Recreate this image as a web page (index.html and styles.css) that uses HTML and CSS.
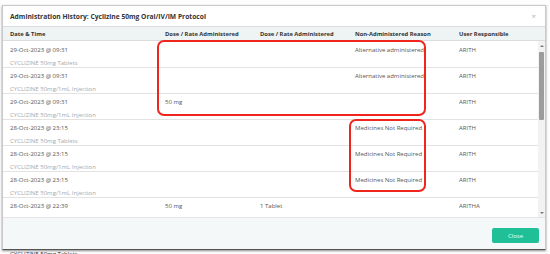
FILE: index.html
```html
<!DOCTYPE html>
<html>
<head>
<meta charset="utf-8">
<link rel="stylesheet" href="styles.css">
</head>
<body>
<div class="backdrop-line"></div>
<div class="modal">
  <div class="modal-header">
    <span class="title">Administration History: Cyclizine 50mg Oral/IV/IM Protocol</span>
    <span class="close-x">×</span>
  </div>
  <div class="thead">
    <div>Date &amp; Time</div>
    <div>Dose / Rate Administered</div>
    <div>Dose / Rate Administered</div>
    <div>Non-Administered Reason</div>
    <div>User Responsible</div>
  </div>
  <div class="tbody-wrap">
    <div class="rows">
      <div class="row"><div><div class="dt">29-Oct-2023 @ 09:31</div><div class="drug">CYCLIZINE 50mg Tablets</div></div><div></div><div></div><div>Alternative administered</div><div>ARITH</div></div>
      <div class="row"><div><div class="dt">29-Oct-2023 @ 09:31</div><div class="drug">CYCLIZINE 50mg/1mL Injection</div></div><div></div><div></div><div>Alternative administered</div><div>ARITH</div></div>
      <div class="row"><div><div class="dt">29-Oct-2023 @ 09:31</div><div class="drug">CYCLIZINE 50mg/1mL Injection</div></div><div>50 mg</div><div></div><div></div><div>ARITH</div></div>
      <div class="row"><div><div class="dt">28-Oct-2023 @ 23:15</div><div class="drug">CYCLIZINE 50mg Tablets</div></div><div></div><div></div><div>Medicines Not Required</div><div>ARITH</div></div>
      <div class="row"><div><div class="dt">28-Oct-2023 @ 23:15</div><div class="drug">CYCLIZINE 50mg/1mL Injection</div></div><div></div><div></div><div>Medicines Not Required</div><div>ARITH</div></div>
      <div class="row"><div><div class="dt">28-Oct-2023 @ 23:15</div><div class="drug">CYCLIZINE 50mg/1mL Injection</div></div><div></div><div></div><div>Medicines Not Required</div><div>ARITH</div></div>
      <div class="row"><div><div class="dt">28-Oct-2023 @ 22:39</div><div class="drug">CYCLIZINE 50mg Tablets</div></div><div>50 mg</div><div>1 Tablet</div><div></div><div>ARITHA</div></div>
    </div>
    <div class="scrollbar">
      <div class="sb-btn up"></div>
      <div class="sb-track"><div class="sb-thumb"></div></div>
      <div class="sb-btn down"></div>
    </div>
  </div>
  <div class="modal-footer">
    <button class="btn-close">Close</button>
  </div>
  <div class="highlight h1"></div>
  <div class="highlight h2"></div>
</div>
<div class="below">CYCLIZINE 50mg Tablets</div>
</body>
</html>
```
FILE: styles.css
```css
* { box-sizing: border-box; }
html, body { margin: 0; padding: 0; }
body {
  width: 550px;
  height: 254px;
  overflow: hidden;
  background: #fdfdfd;
  font-family: "Open Sans", "Liberation Sans", sans-serif;
  color: #444;
}
.backdrop-line {
  height: 6px;
  border-bottom: 1px dotted #d8d8d8;
  margin: 0 2px;
  opacity: .8;
}
.modal {
  position: relative;
  margin-left: 2px;
  width: 544px;
  height: 245px;
  margin-top: -1px;
  background: #fff;
  border: 1px solid #c9c9c9;
  border-bottom: 1px solid #555;
  box-shadow: 0 1px 2px rgba(0,0,0,.45);
  display: flex;
  flex-direction: column;
}
.modal-header {
  height: 20px;
  flex: none;
  display: flex;
  align-items: center;
  justify-content: space-between;
  padding: 0 9px 0 7px;
}
.title {
  font-size: 6.7px;
  font-weight: 700;
  color: #333;
}
.close-x {
  font-size: 8px;
  color: #b5b5b5;
  line-height: 1;
}
.thead {
  height: 15px;
  flex: none;
  background: #eef3f4;
  border-top: 1px solid #dcdcdc;
  border-bottom: 1px solid #dcdcdc;
  display: grid;
  grid-template-columns: 155px 95px 95px 104px 1fr;
  padding-left: 7px;
  align-items: center;
  font-size: 5.8px;
  font-weight: 700;
  color: #333;
}
.tbody-wrap {
  height: 176px;
  flex: none;
  display: flex;
  overflow: hidden;
}
.rows {
  flex: 1;
  overflow: hidden;
}
.row {
  height: 26px;
  border-bottom: 1px solid #e2e2e2;
  display: grid;
  grid-template-columns: 155px 95px 95px 104px 1fr;
  padding: 4px 0 0 7px;
  font-size: 6px;
  line-height: 9px;
  color: #555;
}
.row:first-child { height: 27px; padding-top: 5px; }
.drug {
  margin-top: 4px;
  color: #a8a8a8;
}
.scrollbar {
  width: 7px;
  display: flex;
  flex-direction: column;
  background: #f2f2f2;
}
.sb-btn {
  height: 9px;
  display: flex;
  align-items: center;
  justify-content: center;
}
.sb-btn::before {
  content: "";
  border-left: 2px solid transparent;
  border-right: 2px solid transparent;
}
.sb-btn.up::before { border-bottom: 2px solid #777; }
.sb-btn.down::before { border-top: 2px solid #777; }
.sb-track {
  flex: 1;
  padding: 2px 1px 0;
}
.sb-thumb {
  height: 68px;
  background: #9c9c9c;
  border-radius: 1px;
}
.modal-footer {
  flex: 1;
  background: #f4f8f8;
  border-top: 1px solid #e4e4e4;
  display: flex;
  justify-content: flex-end;
  align-items: flex-start;
  padding: 10px 6px 0 0;
}
.btn-close {
  width: 47px;
  height: 15px;
  border: none;
  border-radius: 2px;
  background: #1fbf98;
  color: #e8fff8;
  font-family: "Open Sans", "Liberation Sans", sans-serif;
  font-size: 6px;
  padding: 0;
}
.highlight {
  position: absolute;
  border: 2px solid #f0251d;
  border-radius: 7px;
  pointer-events: none;
}
.h1 { left: 154px; top: 34px; width: 269px; height: 76px; }
.h2 { left: 346px; top: 113px; width: 77px; height: 73px; }
.below {
  margin: 1px 0 0 10px;
  font-size: 6px;
  line-height: 6px;
  color: #333;
}
```
